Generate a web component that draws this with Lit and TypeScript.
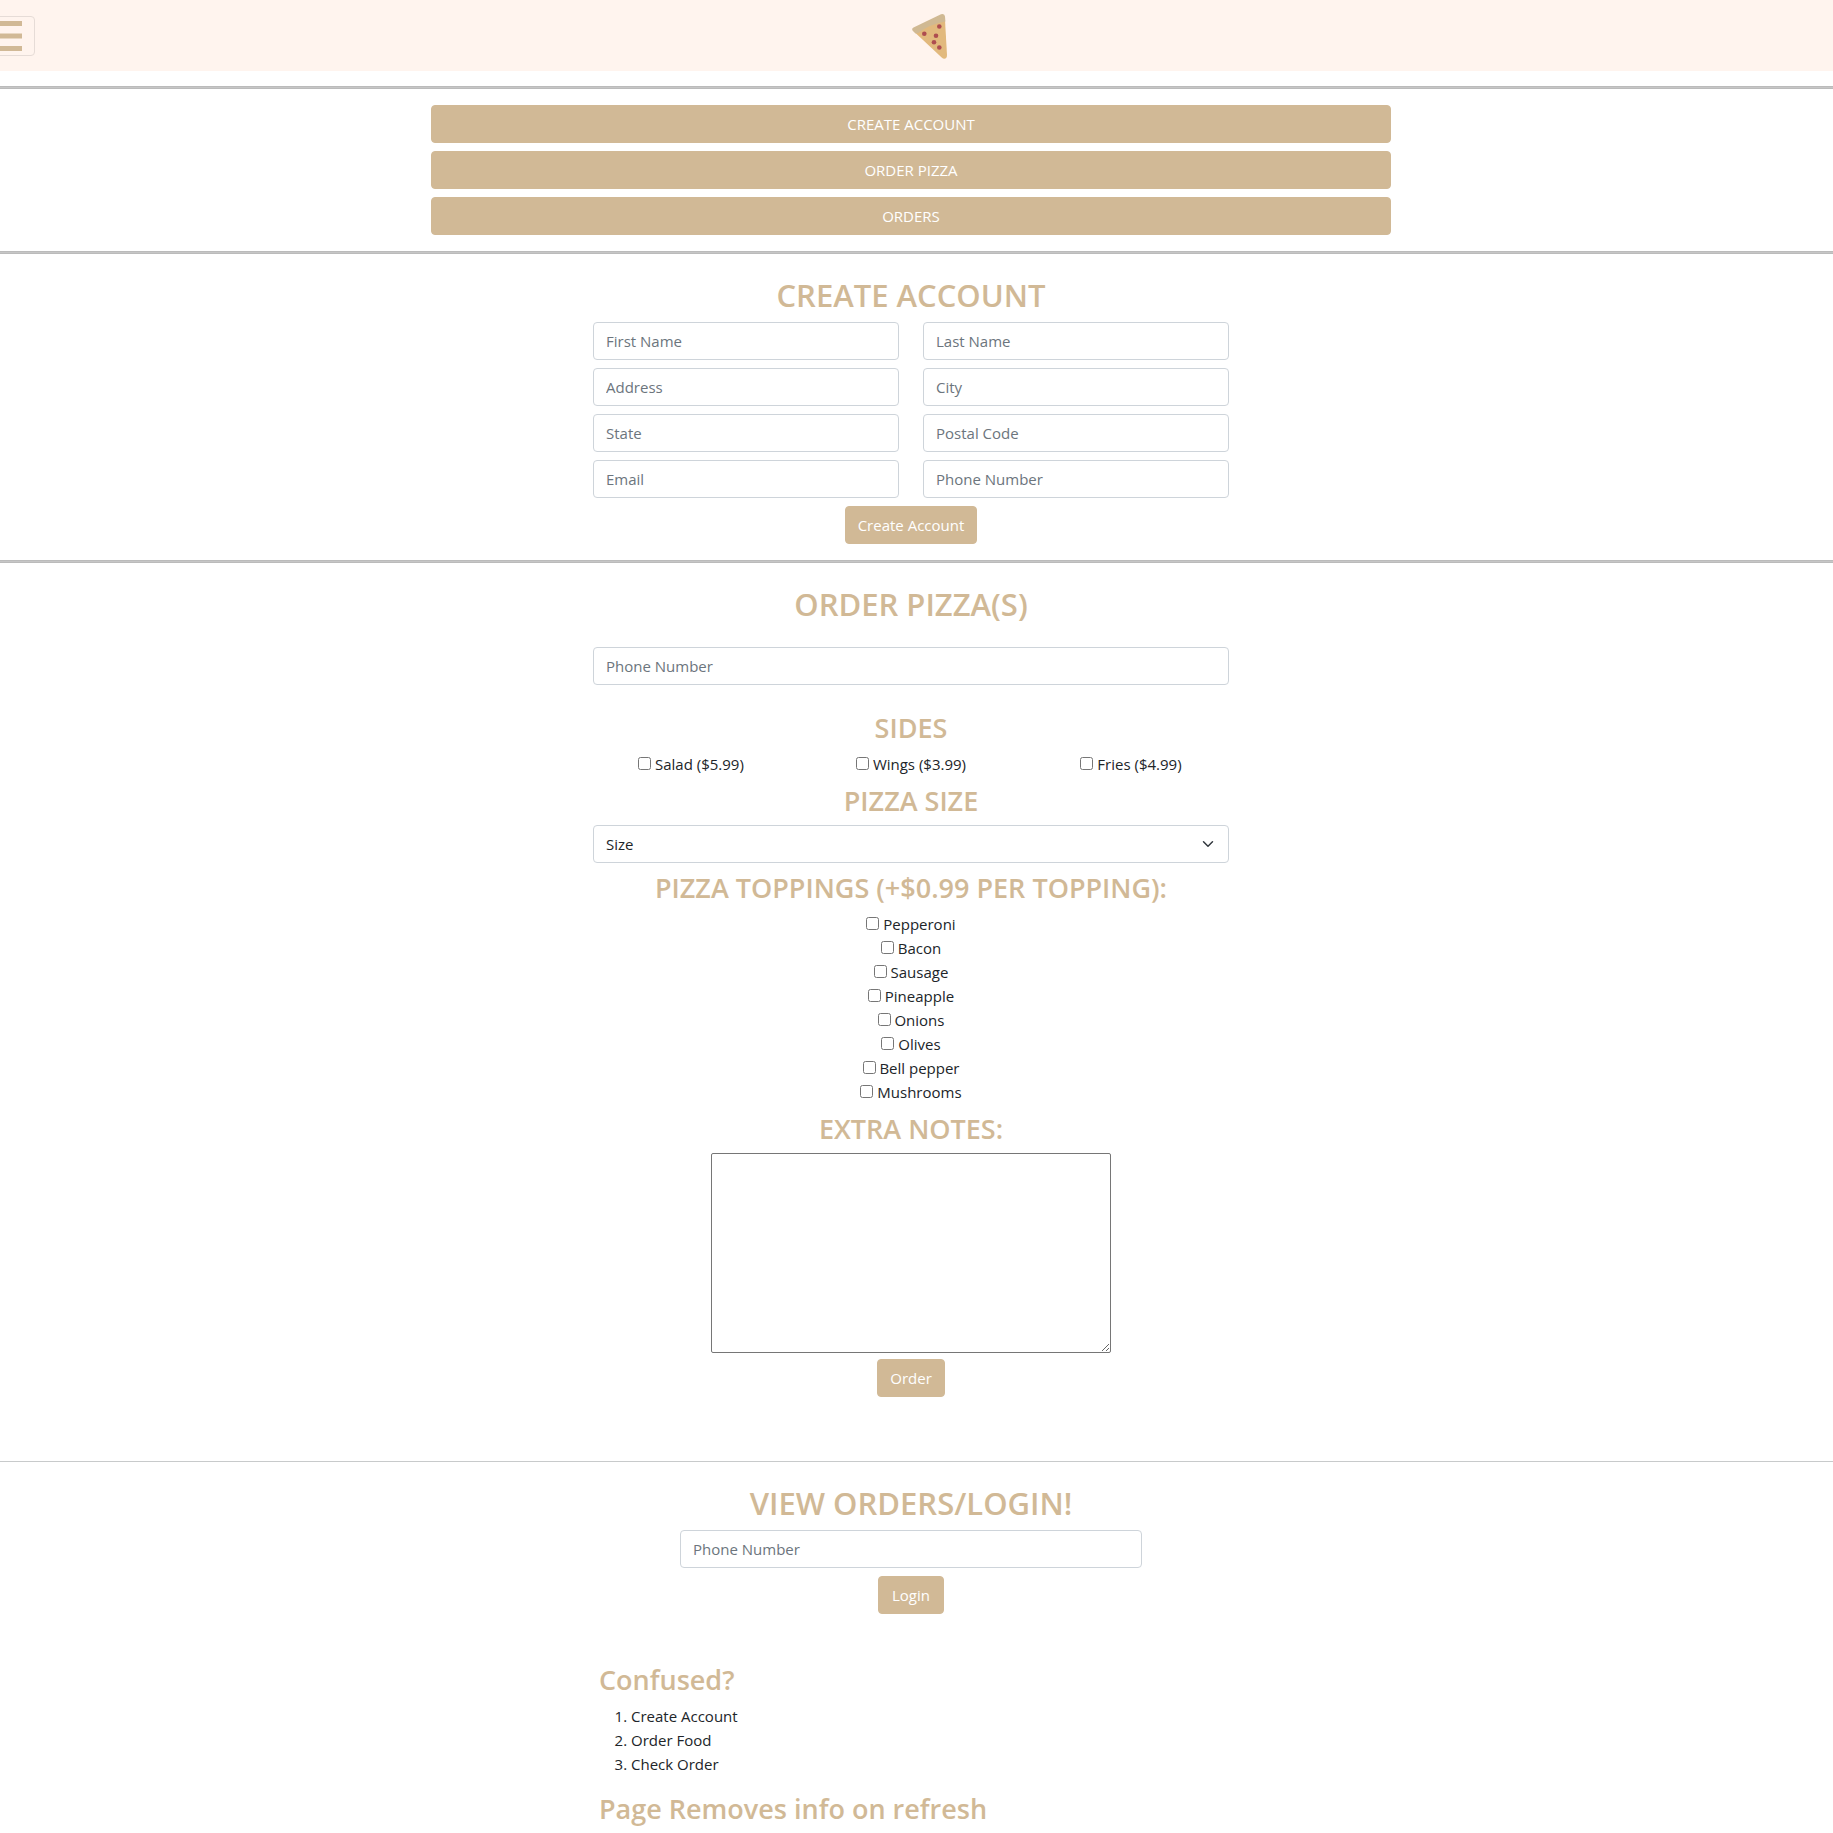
import { LitElement, html, css } from "lit";
import { customElement } from "lit/decorators.js";

const ACCOUNT_FIELDS = [
  ["First Name", "text"],
  ["Last Name", "text"],
  ["Address", "text"],
  ["City", "text"],
  ["State", "text"],
  ["Postal Code", "text"],
  ["Email", "email"],
  ["Phone Number", "tel"],
];

const SIDES = ["Salad ($5.99)", "Wings ($3.99)", "Fries ($4.99)"];

const SIZES = ["Size", "Small", "Medium", "Large"];

const TOPPINGS = [
  "Pepperoni",
  "Bacon",
  "Sausage",
  "Pineapple",
  "Onions",
  "Olives",
  "Bell pepper",
  "Mushrooms",
];

const STEPS = ["Create Account", "Order Food", "Check Order"];

@customElement("app-root")
export class AppRoot extends LitElement {
  static styles = css`
    :host {
      --tan: #d1b996;
      display: block;
      overflow-x: hidden;
      padding-bottom: 8px;
      background: #fff;
      color: #212529;
      font-family: "Open Sans", "Noto Sans", sans-serif;
      font-size: 15px;
      line-height: 24px;
    }
    *,
    *::before,
    *::after {
      box-sizing: border-box;
    }
    .navbar {
      display: flex;
      align-items: center;
      padding: 8px 8px 8px 0;
      height: 71px;
      background: #fff4ee;
    }
    .toggler {
      flex: none;
      display: flex;
      margin-left: -21px;
      padding: 4px 12px;
      border: 1px solid #e6dcd7;
      border-radius: 4px;
      background: transparent;
    }
    .brand {
      flex: 1;
      display: flex;
      justify-content: center;
    }
    .brand svg,
    .toggler svg {
      display: block;
    }
    .rule {
      height: 3px;
      margin: 16px 0;
      border: solid #bbb;
      border-width: 1px 0;
      background: #c6c6c6;
    }
    .navbar + .rule {
      margin-top: 15px;
    }
    .rule.thin {
      height: 1px;
      margin: 64px 0 0;
      border: 0;
      background: #c8cacb;
    }
    .section {
      display: flex;
      flex-direction: column;
      align-items: center;
      gap: 8px;
      padding-right: 11px;
    }
    .titled {
      padding-top: 6px;
    }
    .column {
      width: 100%;
      max-width: 636px;
    }
    .menu {
      display: flex;
      flex-direction: column;
      gap: 8px;
      width: 100%;
      max-width: 960px;
    }
    .fields {
      display: grid;
      grid-template-columns: 1fr 1fr;
      gap: 8px 24px;
    }
    h2,
    h3,
    ol {
      margin: 0;
    }
    h2,
    h3 {
      color: var(--tan);
      font-weight: 600;
      text-align: center;
    }
    h2 {
      font-size: 31px;
      line-height: 38px;
    }
    h3 {
      font-size: 27px;
      line-height: 33px;
    }
    .btn {
      min-width: 66px;
      padding: 6px 12px;
      border: 1px solid var(--tan);
      border-radius: 4px;
      background: var(--tan);
      color: #fff;
      font: inherit;
      text-align: center;
      text-decoration: none;
      cursor: pointer;
    }
    .control {
      display: block;
      width: 100%;
      height: 38px;
      padding: 6px 12px;
      border: 1px solid #ced4da;
      border-radius: 4px;
      background: #fff;
      color: #212529;
      font: inherit;
    }
    .control::placeholder {
      color: #6c757d;
      opacity: 1;
    }
    select.control {
      appearance: none;
      background: #fff
        url("data:image/svg+xml,%3Csvg xmlns='http://www.w3.org/2000/svg' viewBox='0 0 16 16'%3E%3Cpath fill='none' stroke='%23343a40' stroke-linecap='round' stroke-linejoin='round' stroke-width='2' d='M2 5l6 6 6-6'/%3E%3C/svg%3E")
        no-repeat right 12px center / 16px 12px;
    }
    .spaced {
      padding: 16px 0 18px;
    }
    .sides {
      display: grid;
      grid-template-columns: repeat(3, 1fr);
      gap: 24px;
      text-align: center;
    }
    .toppings {
      display: flex;
      flex-direction: column;
      align-items: center;
    }
    .check input {
      width: 13px;
      height: 13px;
      margin: 0;
    }
    .notes {
      display: block;
      width: 100%;
      max-width: 400px;
      height: 200px;
      margin: 0 0 -2px;
      border: 1px solid #767676;
      border-radius: 2px;
      font: inherit;
      resize: both;
    }
    .narrow {
      max-width: 462px;
    }
    .view {
      padding-top: 22px;
    }
    .help {
      display: flex;
      flex-direction: column;
      gap: 8px;
      padding: 49px 6px 0;
    }
    .help h3 {
      text-align: left;
    }
    .steps {
      padding-left: 32px;
      margin-bottom: 8px;
    }
  `;

  private field(label: string, type: string) {
    return html`<input
      class="control"
      type=${type}
      placeholder=${label}
      aria-label=${label}
    />`;
  }

  private check(label: string) {
    return html`<label class="check"><input type="checkbox" /> ${label}</label>`;
  }

  render() {
    return html`
      <nav class="navbar">
        <button class="toggler" type="button" aria-label="Toggle navigation">
          <svg width="30" height="30" viewBox="0 0 30 30" aria-hidden="true">
            <path
              d="M0 2.5h30M0 15h30M0 27.5h30"
              stroke="#d1b996"
              stroke-width="5"
            />
          </svg>
        </button>
        <a class="brand" href="#" aria-label="Home">
          <svg width="36" height="46" viewBox="0 0 36 46" aria-hidden="true">
            <path
              d="M4 17 33 7 35 42Q35 45.800 32.300 45.800Q31 45.800 29.700 44.600L3.500 20Z"
              fill="#e2b97d"
            />
            <path
              d="M1.500 14.500 29 1.300Q32.600 0 33 3.500L33.400 8.500Q18 11 6.300 20L3.500 20.500 0.500 17.500Q-0.500 15.500 1.500 14.500Z"
              fill="#d0b993"
            />
            <g fill="#ae4d50">
              <circle cx="27.300" cy="13.500" r="2.300" />
              <circle cx="12.300" cy="20.800" r="2.300" />
              <circle cx="24" cy="22.800" r="2.300" />
              <circle cx="22" cy="29.200" r="2.300" />
              <circle cx="27.300" cy="34.500" r="2.300" />
            </g>
          </svg>
        </a>
      </nav>

      <hr class="rule" />
      <div class="section">
        <div class="menu">
          <a class="btn" href="#create">CREATE ACCOUNT</a>
          <a class="btn" href="#order">ORDER PIZZA</a>
          <a class="btn" href="#orders">ORDERS</a>
        </div>
      </div>

      <hr class="rule" />
      <form class="section titled" id="create">
        <h2>CREATE ACCOUNT</h2>
        <div class="column fields">
          ${ACCOUNT_FIELDS.map(([label, type]) => this.field(label, type))}
        </div>
        <button class="btn" type="button">Create Account</button>
      </form>

      <hr class="rule" />
      <form class="section titled" id="order">
        <h2>ORDER PIZZA(S)</h2>
        <div class="column spaced">${this.field("Phone Number", "tel")}</div>
        <h3>SIDES</h3>
        <div class="column sides">${SIDES.map((s) => this.check(s))}</div>
        <h3>PIZZA SIZE</h3>
        <div class="column">
          <select class="control" aria-label="Pizza size">
            ${SIZES.map((s) => html`<option>${s}</option>`)}
          </select>
        </div>
        <h3>PIZZA TOPPINGS (+$0.99 PER TOPPING):</h3>
        <div class="column toppings">${TOPPINGS.map((t) => this.check(t))}</div>
        <h3>EXTRA NOTES:</h3>
        <textarea class="notes" aria-label="Extra notes"></textarea>
        <button class="btn" type="button">Order</button>
      </form>

      <hr class="rule thin" />
      <form class="section view" id="orders">
        <h2>VIEW ORDERS/LOGIN!</h2>
        <div class="column narrow">${this.field("Phone Number", "tel")}</div>
        <button class="btn" type="button">Login</button>
      </form>

      <div class="section">
        <div class="column help">
          <h3>Confused?</h3>
          <ol class="steps">
            ${STEPS.map((s) => html`<li>${s}</li>`)}
          </ol>
          <h3>Page Removes info on refresh</h3>
        </div>
      </div>
    `;
  }
}
